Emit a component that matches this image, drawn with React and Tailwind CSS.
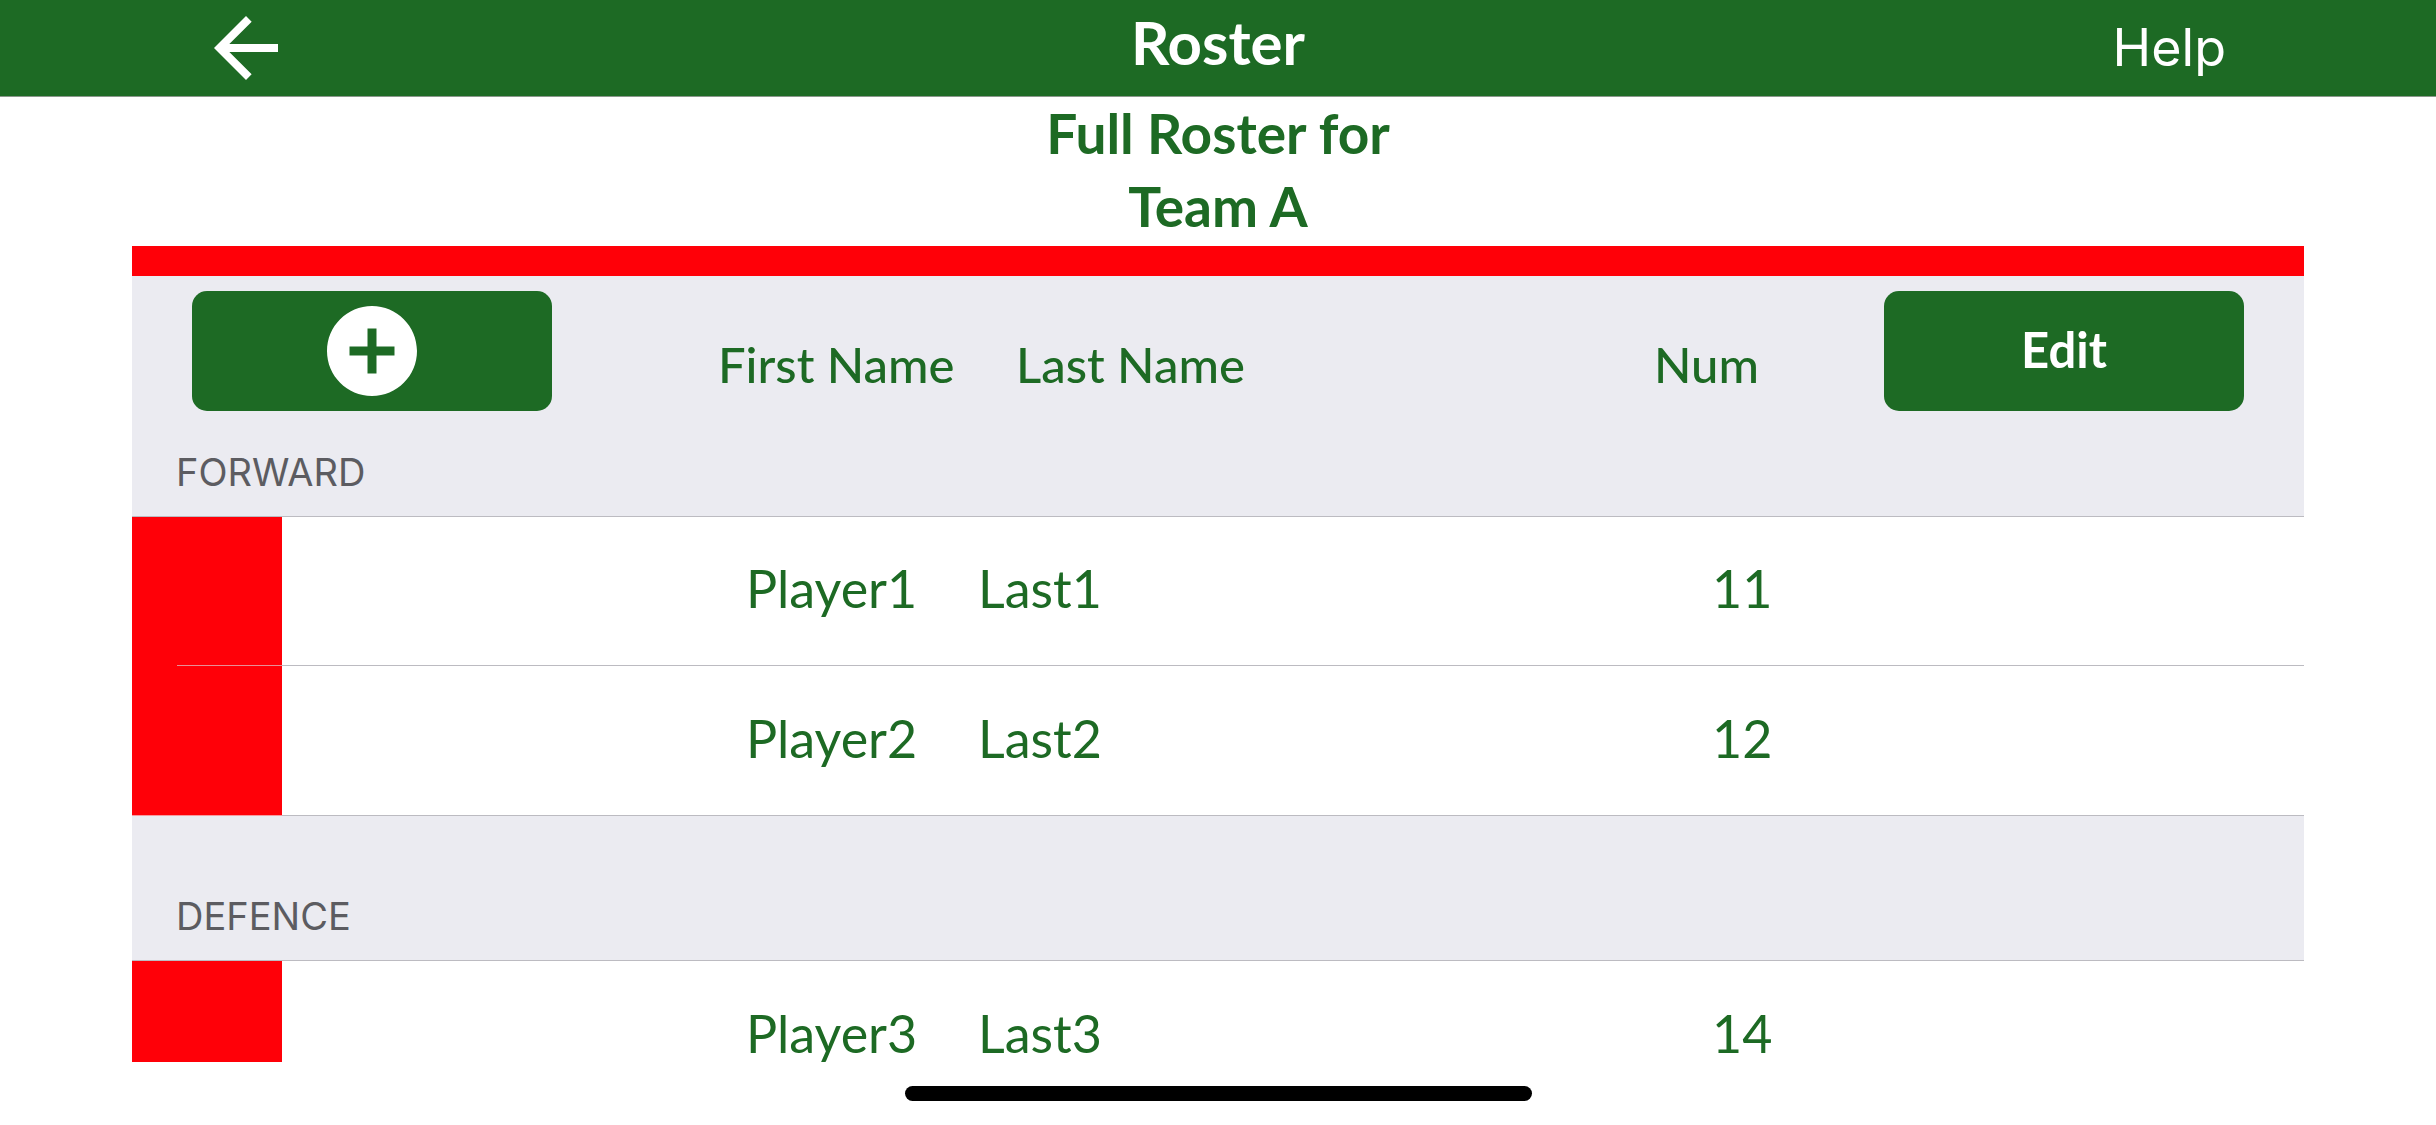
import React, { Fragment } from 'react';

const sections = [
  {
    name: 'FORWARD',
    players: [
      { first: 'Player1', last: 'Last1', num: 11 },
      { first: 'Player2', last: 'Last2', num: 12 },
    ],
  },
  {
    name: 'DEFENCE',
    players: [{ first: 'Player3', last: 'Last3', num: 14 }],
  },
];

function BackIcon() {
  return (
    <svg viewBox="0 0 24 24" className="size-24" fill="currentColor" aria-hidden="true">
      <path d="M20 11H7.83l5.59-5.59L12 4l-8 8 8 8 1.41-1.41L7.83 13H20v-2z" />
    </svg>
  );
}

function AddIcon() {
  return (
    <svg viewBox="2 2 20 20" className="size-[90px]" fill="currentColor" aria-hidden="true">
      <path d="M12 2C6.48 2 2 6.48 2 12s4.48 10 10 10 10-4.48 10-10S17.52 2 12 2zm5 11h-4v4h-2v-4H7v-2h4V7h2v4h4v2z" />
    </svg>
  );
}

function PlayerRow({ player, isLast }) {
  return (
    <tr className={`text-[52px] leading-[52px] ${isLast ? 'h-[150px]' : 'h-[149px]'}`}>
      <td className={`relative bg-[#ff0008] ${isLast ? 'border-b border-[#f79a9f]' : ''}`}>
        {/* Inset separator between players */}
        {!isLast && <span className="absolute right-0 bottom-0 left-[45px] h-px bg-[#e89096]" />}
      </td>
      <td className="border-b border-[#bcbbc1]"></td>
      <td className="border-b border-[#bcbbc1] pb-1.5 pl-[28px]">{player.first}</td>
      <td className="border-b border-[#bcbbc1] pb-1.5">{player.last}</td>
      <td className="border-b border-[#bcbbc1] pb-1.5 pl-[58px]">{player.num}</td>
      <td className="border-b border-[#bcbbc1]"></td>
    </tr>
  );
}

export default function App() {
  return (
    <div className="flex h-screen flex-col overflow-hidden bg-white font-['Lato',sans-serif] text-[#1d6a24]">
      {/* Nav bar */}
      <header className="grid h-[97px] shrink-0 grid-cols-3 items-center border-b border-[#8a978b] bg-[#1d6a24] px-[198px] text-white">
        <button type="button" aria-label="Back" className="justify-self-start">
          <BackIcon />
        </button>
        <h1 className="pb-3 text-center text-[60px] leading-[72px] font-bold">Roster</h1>
        <button type="button" className="justify-self-end pr-3 font-['Inter',sans-serif] text-[52px] leading-[60px]">
          Help
        </button>
      </header>

      <h2 className="h-[149px] shrink-0 text-center text-[55px] leading-[73px] font-bold">
        Full Roster for
        <br />
        Team A
      </h2>

      {/* Roster list */}
      <main className="mx-[132px] min-h-0 flex-1 overflow-hidden border-t-[30px] border-[#ff0008]">
        <table className="w-full table-fixed border-separate border-spacing-0">
          <colgroup>
            <col className="w-[150px]" />
            <col className="w-[436px]" />
            <col className="w-[260px]" />
            <col />
            <col className="w-[120px]" />
            <col className="w-[530px]" />
          </colgroup>
          <thead>
            <tr className="h-[150px] bg-[#ebebf1] text-[49px] leading-[60px]">
              <th colSpan={2} className="pl-[60px] text-left">
                <button
                  type="button"
                  aria-label="Add player"
                  className="flex h-[120px] w-[360px] items-center justify-center rounded-[15px] bg-[#1d6a24] text-white"
                >
                  <AddIcon />
                </button>
              </th>
              <th className="pt-[26px] text-left font-medium whitespace-nowrap">First Name</th>
              <th className="pt-[26px] pl-[38px] text-left font-medium">Last Name</th>
              <th className="pt-[26px] text-left font-medium">Num</th>
              <th className="pl-[110px] text-left">
                <button
                  type="button"
                  className="h-[120px] w-[360px] rounded-[15px] bg-[#1d6a24] pb-1 font-bold text-white"
                >
                  Edit
                </button>
              </th>
            </tr>
          </thead>
          <tbody>
            {sections.map((section, index) => (
              <Fragment key={section.name}>
                <tr className={index === 0 ? 'h-[91px] bg-[#ebebf1]' : 'h-[145px] bg-[#ebebf1]'}>
                  <th
                    colSpan={6}
                    className="border-b border-[#bcbbc1] pb-[21px] pl-[44px] text-left align-bottom font-['Inter',sans-serif] text-[38px] leading-[46px] font-normal text-[#5c5c61]"
                  >
                    {section.name}
                  </th>
                </tr>
                {section.players.map((player, i) => (
                  <PlayerRow key={player.num} player={player} isLast={i === section.players.length - 1} />
                ))}
              </Fragment>
            ))}
          </tbody>
        </table>
      </main>

      {/* Home indicator */}
      <footer className="flex h-[63px] shrink-0 items-end justify-center pb-6">
        <div className="h-[15px] w-[627px] rounded-full bg-black" />
      </footer>
    </div>
  );
}
